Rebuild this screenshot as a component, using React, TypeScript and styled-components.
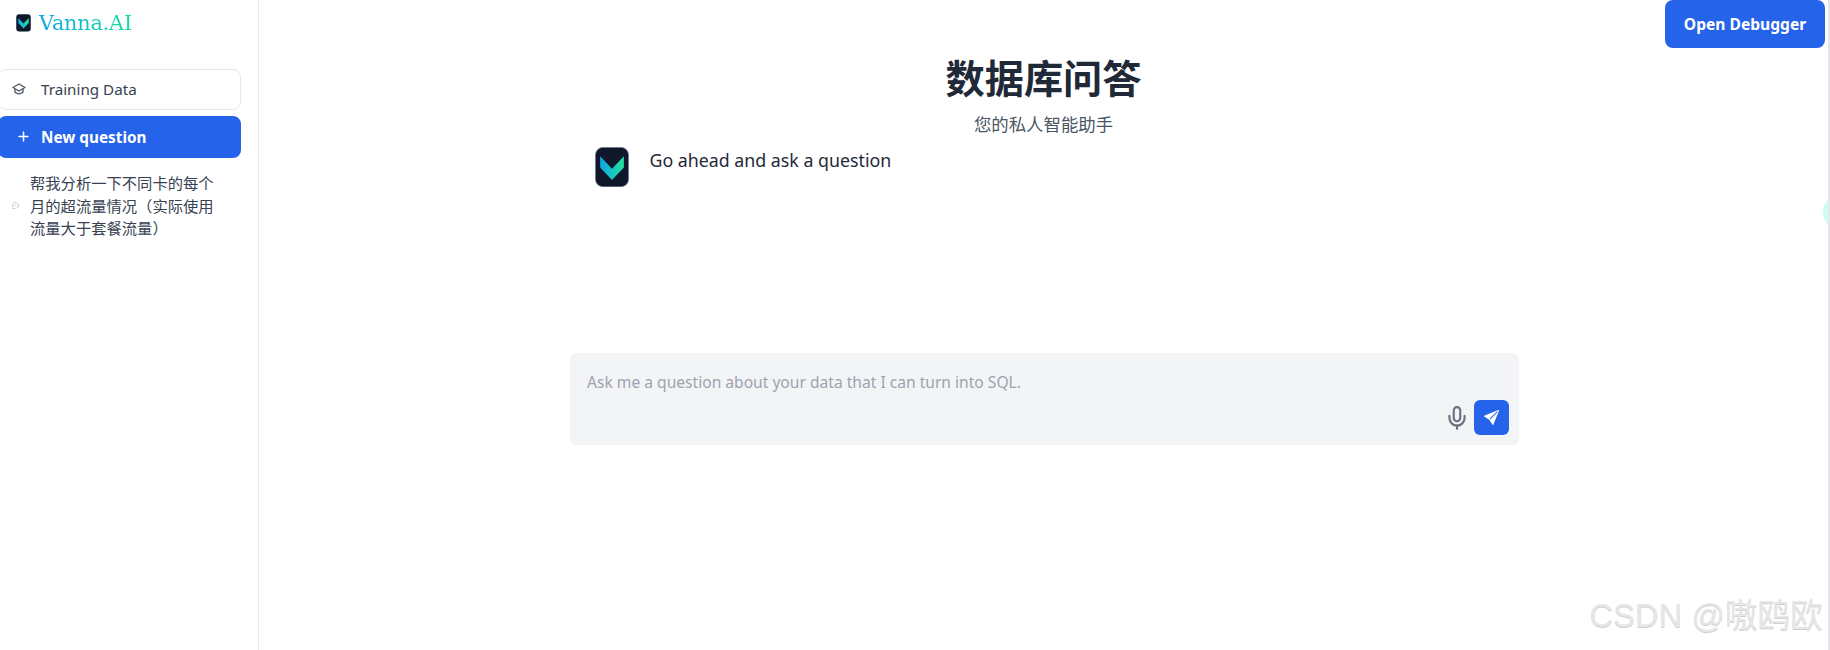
import styled, { createGlobalStyle } from "styled-components";
import { Mic } from "lucide-react";
import { BsPlusLg, BsSendFill, BsChatDots } from "react-icons/bs";

const GlobalStyle = createGlobalStyle`
  html, body {
    margin: 0;
    padding: 0;
    background: #fff;
    overflow: hidden;
  }

  body {
    font-family: "Noto Sans", "Noto Sans CJK SC", sans-serif;
  }
`;

const Page = styled.div`
  position: relative;
  display: flex;
  width: 1830px;
  height: 650px;
  overflow: hidden;
  box-sizing: border-box;
  border-right: 2px solid #e5e7eb;
`;

const Sidebar = styled.aside`
  display: flex;
  flex-direction: column;
  flex: 0 0 259px;
  box-sizing: border-box;
  padding-right: 17px;
  border-right: 1px solid #e5e7eb;
`;

const Brand = styled.div`
  display: flex;
  align-items: center;
  gap: 8px;
  height: 46px;
  padding-left: 16px;
`;

const BrandName = styled.span`
  font-family: "DejaVu Serif", "Liberation Serif", serif;
  font-size: 20.8px;
  letter-spacing: -0.2px;
  background: linear-gradient(90deg, #0ea5e9, #14e39a);
  -webkit-background-clip: text;
  background-clip: text;
  color: transparent;
`;

const SideList = styled.nav`
  display: flex;
  flex-direction: column;
  gap: 6px;
  margin-top: 23px;
  margin-left: -2px;
`;

const TrainingLink = styled.div`
  display: flex;
  align-items: center;
  gap: 13px;
  height: 41px;
  box-sizing: border-box;
  padding: 0 0 2px 13px;
  border: 1px solid #e5e7eb;
  border-radius: 8px;
  font-size: 15.2px;
  color: #374151;

  svg {
    color: #4b5563;
    flex: none;
    margin-right: 2px;
  }
`;

const NewQuestion = styled.div`
  display: flex;
  align-items: center;
  gap: 11px;
  height: 42px;
  box-sizing: border-box;
  padding: 0 0 1px 19px;
  border-radius: 8px;
  background: #2563eb;
  font-size: 15.3px;
  font-weight: 700;
  color: #fff;

  svg {
    stroke-width: 0.8px;
    stroke: currentColor;
  }
`;

const HistoryItem = styled.div`
  display: flex;
  align-items: center;
  gap: 11px;
  margin-top: 8px;
  padding-left: 14px;
  font-size: 15.3px;
  line-height: 22.5px;
  color: #374151;

  svg {
    color: #9ca3af;
    flex: none;
  }
`;

const HistoryText = styled.span`
  width: 186px;
`;

const Main = styled.main`
  flex: 1;
  display: flex;
  flex-direction: column;
  align-items: center;
`;

const Title = styled.h1`
  margin: 52px 0 0;
  font-size: 39.2px;
  line-height: 52px;
  font-weight: 700;
  color: #1f2937;
`;

const Subtitle = styled.p`
  margin: 8px 0 0;
  font-size: 17.4px;
  line-height: 24px;
  color: #4b5563;
`;

const Chat = styled.div`
  display: flex;
  gap: 21px;
  width: 950px;
  box-sizing: border-box;
  padding-left: 26px;
  margin-top: 11px;
  font-size: 17.8px;
  line-height: 26px;
  color: #1f2937;
`;

const Composer = styled.div`
  display: flex;
  align-items: flex-end;
  justify-content: space-between;
  width: 949px;
  height: 92px;
  margin-top: 166px;
  margin-left: 2px;
  box-sizing: border-box;
  padding: 18px 10px 10px 17px;
  border-radius: 6px;
  background: #f3f4f6;
`;

const Placeholder = styled.span`
  align-self: flex-start;
  font-size: 15.6px;
  line-height: 22px;
  color: #9ca3af;
`;

const Actions = styled.div`
  display: flex;
  align-items: center;
  gap: 4px;
  color: #6b7280;
`;

const SendButton = styled.div`
  display: flex;
  align-items: center;
  justify-content: center;
  width: 35px;
  height: 35px;
  border-radius: 6px;
  background: #2563eb;
  color: #fff;
`;

const DebugButton = styled.div`
  position: absolute;
  top: 0;
  right: 3px;
  display: flex;
  align-items: center;
  justify-content: center;
  width: 160px;
  height: 48px;
  border-radius: 8px;
  background: #2563eb;
  font-size: 15.6px;
  font-weight: 700;
  color: #fff;
`;

const EdgeBlob = styled.div`
  position: absolute;
  top: 194px;
  right: -31px;
  width: 36px;
  height: 36px;
  border-radius: 50%;
  background: #ccfdf6;
`;

const Watermark = styled.div`
  position: absolute;
  right: 5px;
  bottom: 14px;
  font-family: "Liberation Sans", "Noto Sans CJK SC", sans-serif;
  font-size: 32.4px;
  letter-spacing: 0.3px;
  color: #e6e6e6;
  text-shadow: 0 1px 0 #cfcfcf;
`;

const LogoMark = ({ size, id }: { size: number; id: string }) => (
  <svg width={size} height={(size * 39) / 33} viewBox="0 0 33 39" style={{ flex: "none" }}>
    <defs>
      <linearGradient id={id} x1="0" y1="0" x2="1" y2="0">
        <stop offset="0" stopColor="#0ea5e9" />
        <stop offset="1" stopColor="#22e39a" />
      </linearGradient>
    </defs>
    <rect x="0.5" y="0.5" width="32" height="38" rx="7" fill="#0f172a" stroke="#64748b" strokeWidth="0.6" />
    <path d="M5 9 L16.5 21 L28 9 V20 L16.5 32 L5 20 Z" fill={`url(#${id})`} />
  </svg>
);

const CapIcon = () => (
  <svg width="14" height="14" viewBox="0 0 14 14" fill="none" stroke="currentColor" strokeWidth="1.3" strokeLinejoin="round">
    <path d="M1 5.5 L7 2 L13 5.5 L7 9 Z" />
    <path d="M3 7 V10.2 Q7 13.4 11 10.2 V7" />
  </svg>
);

export default function App() {
  return (
    <>
      <GlobalStyle />
      <Page>
        <Sidebar>
          <Brand>
            <LogoMark size={15} id="brandV" />
            <BrandName>Vanna.AI</BrandName>
          </Brand>
          <SideList>
            <TrainingLink>
              <CapIcon />
              Training Data
            </TrainingLink>
            <NewQuestion>
              <BsPlusLg size={13} />
              New question
            </NewQuestion>
            <HistoryItem>
              <BsChatDots size={7} />
              <HistoryText>帮我分析一下不同卡的每个月的超流量情况（实际使用流量大于套餐流量）</HistoryText>
            </HistoryItem>
          </SideList>
        </Sidebar>
        <Main>
          <Title>数据库问答</Title>
          <Subtitle>您的私人智能助手</Subtitle>
          <Chat>
            <LogoMark size={34} id="chatV" />
            Go ahead and ask a question
          </Chat>
          <Composer>
            <Placeholder>Ask me a question about your data that I can turn into SQL.</Placeholder>
            <Actions>
              <Mic size={26} strokeWidth={2} />
              <SendButton>
                <BsSendFill size={15} />
              </SendButton>
            </Actions>
          </Composer>
        </Main>
        <DebugButton>Open Debugger</DebugButton>
        <EdgeBlob />
        <Watermark>CSDN @嗷鸥欧</Watermark>
      </Page>
    </>
  );
}
